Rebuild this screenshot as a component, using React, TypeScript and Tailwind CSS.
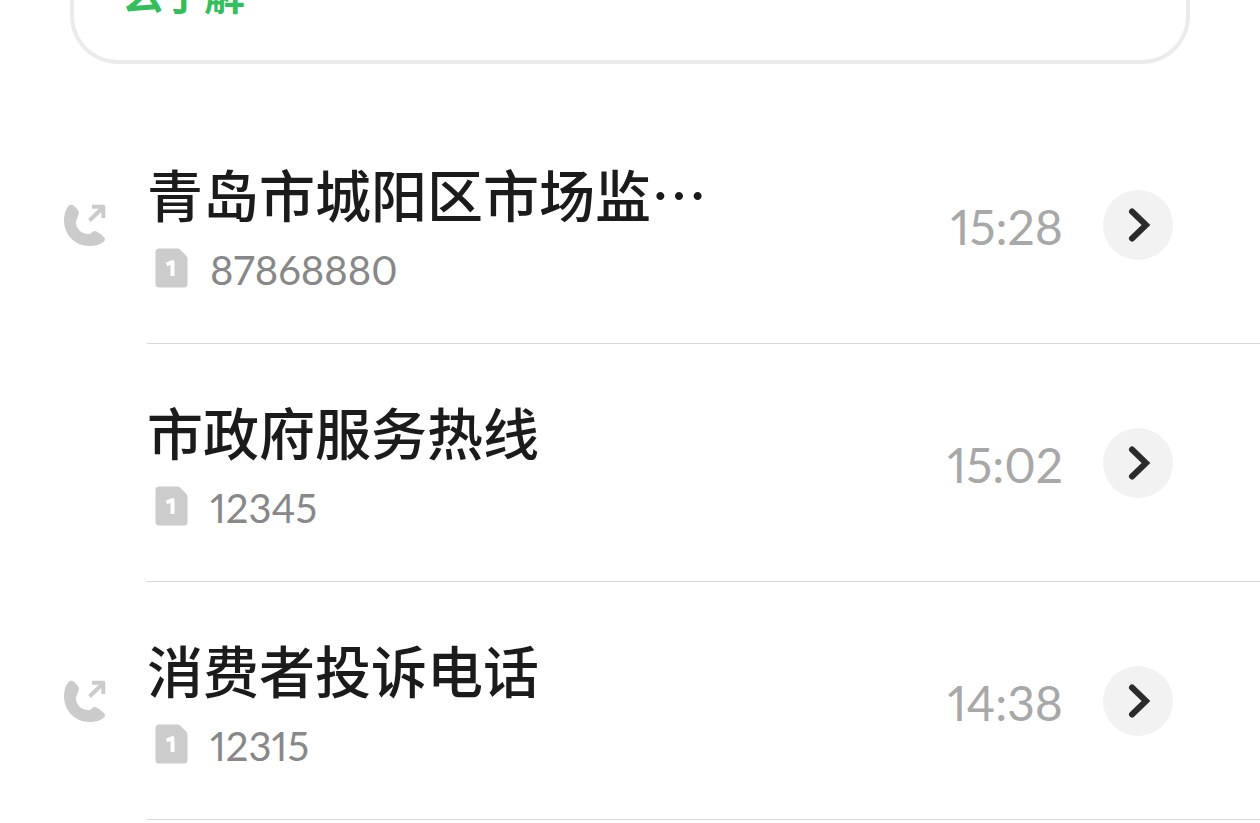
interface Call {
  name: string;
  number: string;
  time: string;
  outgoing: boolean;
}

const calls: Call[] = [
  { name: '青岛市城阳区市场监⋯', number: '87868880', time: '15:28', outgoing: true },
  { name: '市政府服务热线', number: '12345', time: '15:02', outgoing: false },
  { name: '消费者投诉电话', number: '12315', time: '14:38', outgoing: true },
];

function OutgoingIcon() {
  return (
    <svg viewBox="0 0 44 44" className="size-11" role="img" aria-label="呼出">
      <path
        d="M5.500 3C2.500 6.500 1 11.500 1 17.500C1 31.500 12 43 26.500 43C32.500 43 37.500 41.500 41 38.500C42.300 37.300 42.200 35.500 41 34.300Q37.500 30.500 33.500 28.500Q31.500 27.500 29.500 29L27 31C19.500 32 12.500 26 13 18.500L15.500 11.500Q16.500 9.500 15.500 8Q13.500 5 10.500 2.600Q7.800 0.800 5.500 3Z"
        fill="#cbcbcb"
      />
      <path d="M26.500 17.500L40 4.500M29 3.800H40.300V15" fill="none" stroke="#cbcbcb" strokeWidth="4" strokeLinejoin="round" />
    </svg>
  );
}

function SimIcon() {
  return (
    <svg viewBox="0 0 33 40" className="h-10 w-[33px]" role="img" aria-label="SIM 1">
      <path
        d="M4 0.500H22.500Q24 0.500 25 1.500L31.500 8Q32.500 9 32.500 10.500V36Q32.500 39.500 29 39.500H4Q0.500 39.500 0.500 36V4Q0.500 0.500 4 0.500Z"
        fill="#cccccc"
      />
      <path d="M11.500 16.500L17.500 14V28" fill="none" stroke="#fff" strokeWidth="4" strokeLinejoin="round" />
    </svg>
  );
}

function CallRow({ call }: { call: Call }) {
  return (
    <li className="flex">
      <div className="flex w-[147px] shrink-0 items-center pl-[63px]">
        {call.outgoing && <OutgoingIcon />}
      </div>
      <div className="flex flex-1 items-center border-b border-[#d9d9d9] py-[55px] pr-[87px]">
        <div className="flex-1">
          <h2 className="text-[56px] leading-[64px] font-medium whitespace-nowrap text-[#1b1b1b]">{call.name}</h2>
          <div className="mt-[23px] flex items-center gap-[22px] pl-2">
            <SimIcon />
            <span className="pt-1 font-[Lato,'Noto_Sans_CJK_SC',sans-serif] text-[40px] leading-9 proportional-nums text-[#888888]">
              {call.number}
            </span>
          </div>
        </div>
        <time className="pt-1 font-[Lato,'Noto_Sans_CJK_SC',sans-serif] text-[48px] leading-[64px] proportional-nums text-[#a8a8a8]">
          {call.time}
        </time>
        <button
          type="button"
          aria-label="通话详情"
          className="ml-10 flex size-[70px] shrink-0 items-center justify-center rounded-full bg-[#f2f2f2]"
        >
          <svg viewBox="0 0 70 70" className="size-full" aria-hidden="true">
            <path d="M29 21.500L43 35L29 48.500" fill="none" stroke="#2b2b2b" strokeWidth="6" strokeLinecap="round" />
          </svg>
        </button>
      </div>
    </li>
  );
}

export default function App() {
  return (
    <main lang="zh-CN" className="overflow-hidden bg-white font-['Noto_Sans_CJK_SC',sans-serif]">
      <section className="mx-[70px] -mt-7 rounded-b-[48px] border-4 border-t-0 border-[#ebebeb] px-12 pb-12">
        <p className="text-[41px] leading-10 font-bold text-[#35bf5c]">么了解</p>
      </section>
      <ul className="mt-[42px]">
        {calls.map((call) => (
          <CallRow key={call.name} call={call} />
        ))}
      </ul>
    </main>
  );
}
